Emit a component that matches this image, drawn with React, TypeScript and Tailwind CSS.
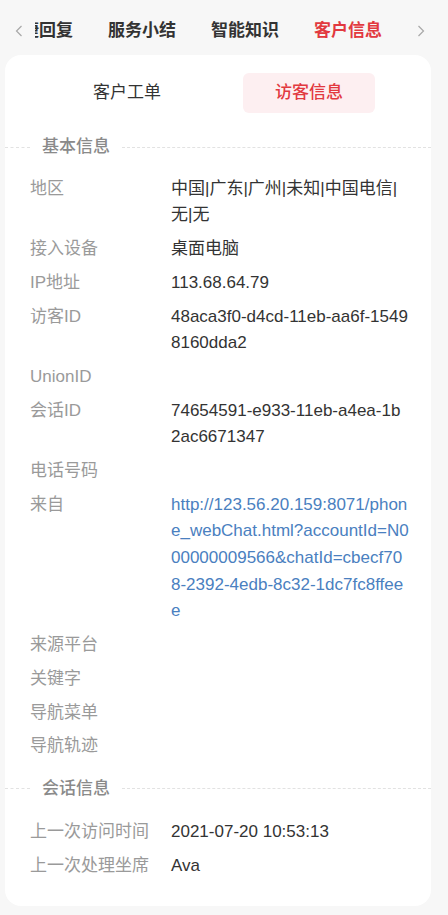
import React from "react";

const font = { fontFamily: '"Liberation Sans", "Noto Sans CJK SC", sans-serif' };

type Row = { label: string; value?: string; link?: boolean };

const basic: Row[] = [
  { label: "地区", value: "中国|广东|广州|未知|中国电信|无|无" },
  { label: "接入设备", value: "桌面电脑" },
  { label: "IP地址", value: "113.68.64.79" },
  { label: "访客ID", value: "48aca3f0-d4cd-11eb-aa6f-15498160dda2" },
  { label: "UnionID" },
  { label: "会话ID", value: "74654591-e933-11eb-a4ea-1b\n2ac6671347" },
  { label: "电话号码" },
  {
    label: "来自",
    value:
      "http://123.56.20.159:8071/phone_webChat.html?accountId=N000000009566&chatId=cbecf708-2392-4edb-8c32-1dc7fc8ffeee",
    link: true,
  },
  { label: "来源平台" },
  { label: "关键字" },
  { label: "导航菜单" },
  { label: "导航轨迹" },
];

const session: Row[] = [
  { label: "上一次访问时间", value: "2021-07-20 10:53:13" },
  { label: "上一次处理坐席", value: "Ava" },
];

function Chevron({ dir }: { dir: "left" | "right" }) {
  return (
    <svg width="8" height="12" viewBox="0 0 8 12" fill="none">
      {dir === "left" ? (
        <polyline points="6.5,1 1.5,6 6.5,11" stroke="#a8a8a8" strokeWidth="1.2" />
      ) : (
        <polyline points="1.5,1 6.5,6 1.5,11" stroke="#a8a8a8" strokeWidth="1.2" />
      )}
    </svg>
  );
}

function SectionHeader({ title }: { title: string }) {
  return (
    <div className="flex h-[26px] items-center">
      <div className="w-[25px] border-t border-dashed border-[#e2e2e2]" />
      <div className="px-[12px] text-[17px] leading-[26px] font-medium text-[#8a8a8a]">{title}</div>
      <div className="flex-1 border-t border-dashed border-[#e2e2e2]" />
    </div>
  );
}

function Rows({ rows, first }: { rows: Row[]; first: boolean }) {
  return (
    <div className={"flex flex-col pl-[25px] pr-[20px] " + (first ? "pt-[12px]" : "pt-[14px]")}>
      {rows.map((r) => (
        <div key={r.label} className="flex py-[3.6px] text-[17px] leading-[26.6px]">
          <div className="w-[141px] shrink-0 text-[#9a9a9a]">{r.label}</div>
          <div
            className={
              "w-[239px] whitespace-pre-line break-all " +
              (r.link ? "text-[#4a80c0]" : "text-[#333333]")
            }
          >
            {r.value ?? ""}
          </div>
        </div>
      ))}
    </div>
  );
}

export default function App() {
  return (
    <div className="min-h-[915px] w-[448px] bg-[#f7f7f7]" style={font}>
      <div className="flex h-[55px] items-center">
        <div className="flex w-[35px] justify-center pl-[2px] pt-[6px]">
          <Chevron dir="left" />
        </div>
        <div className="w-[365px] overflow-hidden pt-[6px]">
          <div className="ml-[-30px] flex gap-[35px] whitespace-nowrap text-[17px] font-bold leading-[26px] text-[#333333]">
            <span>快捷回复</span>
            <span>服务小结</span>
            <span>智能知识</span>
            <span className="text-[#e2393f]">客户信息</span>
          </div>
        </div>
        <div className="flex flex-1 justify-center pr-[7px] pt-[6px]">
          <Chevron dir="right" />
        </div>
      </div>

      <div className="ml-[5px] w-[426px] rounded-[16px] bg-white pt-[18px] pb-[23px]">
        <div className="flex justify-center gap-[50px]">
          <div className="flex h-[40px] w-[132px] items-center justify-center text-[17px] text-[#333333]">
            客户工单
          </div>
          <div className="flex h-[40px] w-[132px] items-center justify-center rounded-[6px] bg-[#fdeff1] text-[17px] font-medium text-[#e2393f]">
            访客信息
          </div>
        </div>

        <div className="mt-[21px]">
          <SectionHeader title="基本信息" />
          <Rows rows={basic} first={true} />
        </div>

        <div className="mt-[12px]">
          <SectionHeader title="会话信息" />
          <Rows rows={session} first={false} />
        </div>
      </div>
    </div>
  );
}
